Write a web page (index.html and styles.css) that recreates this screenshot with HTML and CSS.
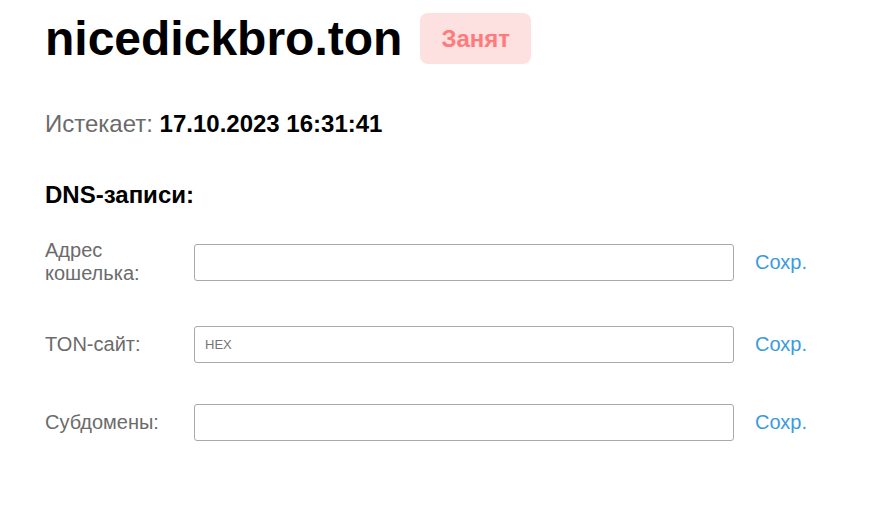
FILE: index.html
```html
<!DOCTYPE html>
<html lang="ru">
<head>
<meta charset="utf-8">
<title>nicedickbro.ton</title>
<link rel="stylesheet" href="styles.css">
</head>
<body>
<div class="page">
  <div class="header">
    <h1 class="title">nicedickbro.ton</h1>
    <span class="badge">Занят</span>
  </div>
  <div class="expires">Истекает: <b class="date">17.10.2023 16:31:41</b></div>
  <h2 class="section">DNS-записи:</h2>
  <div class="rows">
    <div class="row">
      <label class="label">Адрес кошелька:</label>
      <input class="field" type="text">
      <a class="save" href="#">Сохр.</a>
    </div>
    <div class="row">
      <label class="label">TON-сайт:</label>
      <input class="field" type="text" placeholder="HEX">
      <a class="save" href="#">Сохр.</a>
    </div>
    <div class="row">
      <label class="label">Субдомены:</label>
      <input class="field" type="text">
      <a class="save" href="#">Сохр.</a>
    </div>
  </div>
</div>
</body>
</html>
```

FILE: styles.css
```css
html, body {
  margin: 0;
  padding: 0;
  background: #ffffff;
}
body {
  font-family: "Liberation Sans", Arial, sans-serif;
  font-size: 20px;
  color: #000;
}
.page {
  padding: 11px 45px 0 45px;
}
.header {
  display: flex;
  align-items: center;
  gap: 18px;
}
.title {
  margin: 0;
  font-size: 48px;
  font-weight: bold;
  line-height: 55px;
}
.badge {
  background: #fde0e0;
  color: #ff7b7b;
  font-weight: bold;
  font-size: 24px;
  line-height: 27px;
  padding: 12px 21px;
  border-radius: 8px;
}
.expires {
  margin-top: 44px;
  font-size: 24px;
  color: #6b6b6b;
  line-height: 28px;
}
.date {
  color: #000;
}
.section {
  margin: 43px 0 0 0;
  font-size: 24px;
  font-weight: bold;
  line-height: 28px;
}
.rows {
  margin-top: 30px;
  display: flex;
  flex-direction: column;
  gap: 41px;
}
.row {
  display: flex;
  align-items: center;
}
.label {
  width: 149px;
  flex: none;
  color: #6b6b6b;
  line-height: 23px;
}
.field {
  box-sizing: border-box;
  width: 540px;
  height: 37px;
  margin: 0;
  border: 1px solid #a9a9a9;
  border-radius: 3px;
  padding: 0 10px;
  font-family: "Liberation Sans", Arial, sans-serif;
  font-size: 13px;
  color: #333;
  background: #fff;
}
.field::placeholder {
  color: #757575;
}
.save {
  margin-left: 21px;
  color: #3a9bdc;
  text-decoration: none;
  line-height: 23px;
}
```
